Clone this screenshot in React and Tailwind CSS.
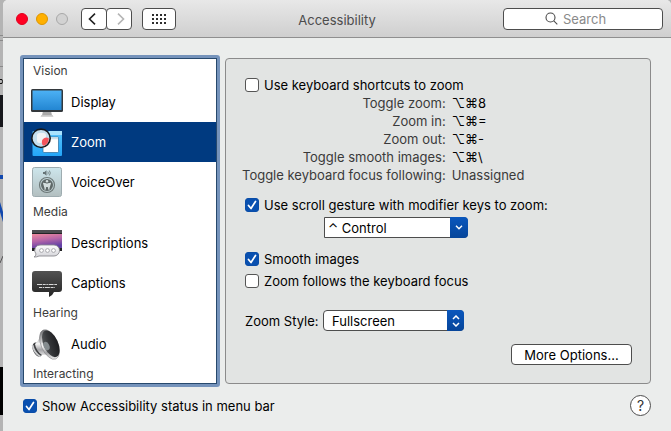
import { useState } from 'react';

const shortcuts = [
  { label: 'Toggle zoom:', keys: '⌥⌘', value: '8' },
  { label: 'Zoom in:', keys: '⌥⌘', value: '=' },
  { label: 'Zoom out:', keys: '⌥⌘', value: '-' },
  { label: 'Toggle smooth images:', keys: '⌥⌘', value: '\\' },
  { label: 'Toggle keyboard focus following:', keys: '', value: 'Unassigned' },
];

function DisplayIcon() {
  return (
    <svg width="32" height="32" viewBox="0 0 32 32" aria-hidden="true">
      <defs>
        <linearGradient id="screen" x1="0" y1="0" x2="0" y2="1">
          <stop offset="0" stopColor="#4cb1f5" />
          <stop offset="1" stopColor="#2386d2" />
        </linearGradient>
      </defs>
      <path d="M12 25h8l1 4.500H11z" fill="#a9a9a9" />
      <path d="M10.500 29h11l1 1.800h-13z" fill="#c6c6c6" />
      <rect x="0" y="3" width="32" height="23" rx="1.500" fill="#33383c" />
      <rect x="1.500" y="4.500" width="29" height="19.500" fill="url(#screen)" />
    </svg>
  );
}

function ZoomIcon() {
  return (
    <svg width="32" height="32" viewBox="0 0 32 32" aria-hidden="true">
      <defs>
        <linearGradient id="folder" x1="0" y1="0" x2="0" y2="1">
          <stop offset="0" stopColor="#5cc4fb" />
          <stop offset="1" stopColor="#23a6f8" />
        </linearGradient>
      </defs>
      <rect x="1.500" y="5" width="29.500" height="25" rx="1" fill="url(#folder)" />
      <rect x="18" y="5" width="13" height="4" fill="#a9e2fd" />
      <rect x="12" y="11" width="15.500" height="15.500" rx="1" fill="#fff" stroke="#2b6b99" strokeWidth="0.700" />
      <rect x="12.500" y="11.300" width="14.500" height="2" fill="#cfdfe8" />
      <circle cx="10" cy="12.300" r="9.200" fill="#c5dfee" stroke="#17191c" strokeWidth="1.600" />
      <rect x="6" y="7" width="9" height="10" rx="2.500" fill="#f1f3f5" />
      <path d="M10.800 16.500a4.500 4.500 0 0 1 7-4.200 8 8 0 0 1-4.800 7.500 3.500 3.500 0 0 1-2.200-3.300z" fill="#f4555c" />
    </svg>
  );
}

function VoiceOverIcon() {
  return (
    <svg width="32" height="32" viewBox="0 0 32 32" aria-hidden="true">
      <defs>
        <linearGradient id="plate" x1="0" y1="0" x2="0" y2="1">
          <stop offset="0" stopColor="#cde6ec" />
          <stop offset="1" stopColor="#b3bfc0" />
        </linearGradient>
      </defs>
      <rect x="1.500" y="1.500" width="29" height="29" rx="2" fill="url(#plate)" stroke="#9eacb0" />
      <path d="M12 6h1.500l2-1.800v5.600l-2-1.800H12z" fill="#667376" />
      <path d="M16.800 5.500q1 1.500 0 3M18.300 4.500q2 2.500 0 5" fill="none" stroke="#667376" strokeWidth="0.800" />
      <circle cx="16" cy="19" r="7.500" fill="none" stroke="#6d7878" strokeWidth="1.200" />
      <circle cx="16" cy="19" r="6" fill="#5f6969" />
      <circle cx="16" cy="15.200" r="1.200" fill="#d5dfdf" />
      <path d="M12 17.200l3 .6v2l-1 4M20 17.200l-3 .6v2l1 4M15 18h2v2.500h-2z" fill="#d5dfdf" stroke="#d5dfdf" strokeWidth="1" />
    </svg>
  );
}

function DescriptionsIcon() {
  return (
    <svg width="32" height="32" viewBox="0 0 32 32" aria-hidden="true">
      <defs>
        <linearGradient id="sunset" x1="0" y1="0" x2="0.300" y2="1">
          <stop offset="0" stopColor="#f08a9d" />
          <stop offset="0.500" stopColor="#b766a8" />
          <stop offset="1" stopColor="#6140a5" />
        </linearGradient>
        <linearGradient id="bubble" x1="0" y1="0" x2="0" y2="1">
          <stop offset="0" stopColor="#fdfdfd" />
          <stop offset="1" stopColor="#d3d3d8" />
        </linearGradient>
      </defs>
      <rect x="1" y="3" width="30" height="21" fill="#232326" />
      <rect x="1" y="3" width="30" height="3" fill="#4c4c4f" />
      <rect x="1" y="7" width="30" height="14" fill="url(#sunset)" />
      <path d="M10 18h13a5.500 5.500 0 0 1 0 11H8q-2 1.200-5 1 1.800-1 2-3a5.500 5.500 0 0 1 5-9z" fill="url(#bubble)" stroke="#8b8b90" strokeWidth="0.900" />
      <g fill="#fff" stroke="#97979c" strokeWidth="0.800">
        <circle cx="10.500" cy="23.500" r="1.900" />
        <circle cx="16.500" cy="23.500" r="1.900" />
        <circle cx="22.500" cy="23.500" r="1.900" />
      </g>
    </svg>
  );
}

function CaptionsIcon() {
  return (
    <svg width="32" height="32" viewBox="0 0 32 32" aria-hidden="true">
      <defs>
        <linearGradient id="caption" x1="0" y1="0" x2="0" y2="1">
          <stop offset="0" stopColor="#525252" />
          <stop offset="1" stopColor="#242424" />
        </linearGradient>
      </defs>
      <path d="M4 4h24a3 3 0 0 1 3 3v15a3 3 0 0 1-3 3h-5q-1 3-5 5v-5H4a3 3 0 0 1-3-3V7a3 3 0 0 1 3-3z" fill="url(#caption)" />
      <path d="M6 17.500h20" stroke="#d8d8d8" strokeWidth="1" strokeDasharray="5 .7 3 .7 1.500 .7" />
      <path d="M8 20.500h16" stroke="#d8d8d8" strokeWidth="1" strokeDasharray="3 .7 1.500 .7 5 .7" />
    </svg>
  );
}

function AudioIcon() {
  return (
    <svg width="32" height="32" viewBox="0 0 32 32" aria-hidden="true">
      <defs>
        <linearGradient id="metal" x1="0" y1="0" x2="0" y2="1">
          <stop offset="0" stopColor="#6f7073" />
          <stop offset="0.450" stopColor="#f6f6f6" />
          <stop offset="0.700" stopColor="#a3a3a6" />
          <stop offset="1" stopColor="#f2f2f2" />
        </linearGradient>
        <linearGradient id="cone" x1="0" y1="0" x2="1" y2="0.300">
          <stop offset="0" stopColor="#5b5e60" />
          <stop offset="0.500" stopColor="#35373a" />
          <stop offset="1" stopColor="#202124" />
        </linearGradient>
      </defs>
      <ellipse cx="6.500" cy="21.500" rx="4.500" ry="7.500" transform="rotate(-24 6.500 21.500)" fill="#3e4043" />
      <path d="M1.500 17q1.500 8 8 11.500" fill="none" stroke="#c9cacc" strokeWidth="1.800" />
      <path d="M4 16q4-3 6-11l11 24q-6-3-10-2-6-4-7-11z" fill="url(#metal)" />
      <ellipse cx="18.500" cy="16.500" rx="8.300" ry="15.800" transform="rotate(-24 18.500 16.500)" fill="url(#metal)" stroke="#77787b" strokeWidth="0.500" />
      <ellipse cx="19.800" cy="15.800" rx="7.200" ry="14.300" transform="rotate(-24 19.800 15.800)" fill="url(#cone)" />
      <ellipse cx="15.500" cy="18" rx="2.800" ry="4.500" transform="rotate(-24 15.500 18)" fill="#858c8f" />
    </svg>
  );
}

const sections = [
  {
    title: 'Vision',
    items: [
      { name: 'Display', Icon: DisplayIcon },
      { name: 'Zoom', Icon: ZoomIcon },
      { name: 'VoiceOver', Icon: VoiceOverIcon },
    ],
  },
  {
    title: 'Media',
    items: [
      { name: 'Descriptions', Icon: DescriptionsIcon },
      { name: 'Captions', Icon: CaptionsIcon },
    ],
  },
  { title: 'Hearing', items: [{ name: 'Audio', Icon: AudioIcon }] },
  { title: 'Interacting', items: [] },
];

// Sliver of the desktop that shows left of the window
function Backdrop() {
  return (
    <svg width="3" height="431" viewBox="0 0 3 431" className="shrink-0" aria-hidden="true">
      <rect width="3" height="431" fill="#b4b4b4" />
      <path d="M0 35.500h3M0 40.500h3M0 66.500h3" stroke="#8a8a8a" />
      <path d="M0 79.500h2q1 2 0 4H0" fill="none" stroke="#111" />
      <rect y="95" width="3" height="32" fill="#17181c" />
      <rect y="175" width="3" height="4" fill="#1048ae" />
      <path d="M0 202l3 10v10L0 212z" fill="#1048ae" />
      <path d="M3 256l-3 7" stroke="#555" />
      <rect y="367" width="3" height="48" fill="#000" />
    </svg>
  );
}

function Checkbox({ label, defaultChecked = false }) {
  return (
    <label className="flex w-fit items-center gap-[5px]">
      <span className="grid">
        <input
          type="checkbox"
          defaultChecked={defaultChecked}
          className="peer col-start-1 row-start-1 size-[14px] appearance-none rounded-[3px] border border-[#555] bg-white checked:border-[#0a4da8] checked:bg-[#0950b0]"
        />
        <svg viewBox="0 0 14 14" className="pointer-events-none invisible col-start-1 row-start-1 size-[14px] peer-checked:visible" aria-hidden="true">
          <path d="M3.500 7.500l2.500 3 4.500-7" fill="none" stroke="#fff" strokeWidth="1.700" strokeLinecap="round" strokeLinejoin="round" />
        </svg>
      </span>
      {label}
    </label>
  );
}

function Toolbar() {
  return (
    <header className="grid h-[38px] grid-cols-[1fr_auto_1fr] items-center rounded-t-[5px] border-b border-[#8f8f8f] bg-linear-to-b from-[#e8e8e8] to-[#cfcfcf] px-2">
      <div className="flex items-center pl-[5px]">
        <div className="flex gap-2">
          <button aria-label="Close" className="size-3 rounded-full border border-[#e0001f] bg-[#ff0022]" />
          <button aria-label="Minimize" className="size-3 rounded-full border border-[#dd9500] bg-[#ffb000]" />
          <button aria-label="Full screen" className="size-3 rounded-full border border-[#a8a8a8] bg-[#d2d2d2]" />
        </div>
        <div className="ml-[13px] flex">
          <button aria-label="Back" className="flex h-[22px] w-[26px] items-center justify-center rounded-sm border border-[#4d4d4d] bg-white">
            <svg width="8" height="12" viewBox="0 0 8 12" fill="none" stroke="#222" strokeWidth="1.600" className="mr-1" aria-hidden="true">
              <path d="M7 .7L1.500 6 7 11.300" />
            </svg>
          </button>
          <button aria-label="Forward" className="-ml-px flex h-[22px] w-[26px] items-center justify-center rounded-sm border border-[#4d4d4d] bg-white">
            <svg width="8" height="12" viewBox="0 0 8 12" fill="none" stroke="#b5b5b5" strokeWidth="1.600" className="ml-1" aria-hidden="true">
              <path d="M1 .7L6.500 6 1 11.300" />
            </svg>
          </button>
        </div>
        <button aria-label="Show all" className="ml-[10px] flex h-[22px] w-[34px] items-center justify-center rounded-sm border border-[#4d4d4d] bg-white">
          <svg width="14" height="10" viewBox="0 0 14 10" stroke="#2e2e2e" strokeWidth="2" strokeDasharray="2 2" aria-hidden="true">
            <path d="M0 1h14M0 5h14M0 9h14" />
          </svg>
        </button>
      </div>
      <h1 className="pt-[2px] text-[#4c4c4c]">Accessibility</h1>
      <div className="flex h-[22px] w-[160px] items-center gap-[5px] justify-self-end rounded-sm border border-[#4d4d4d] bg-white pl-[41px]">
        <svg width="13" height="13" viewBox="0 0 13 13" fill="none" stroke="#4a4a4a" strokeWidth="1.100" className="shrink-0" aria-hidden="true">
          <circle cx="5.500" cy="5.500" r="4.500" />
          <path d="M8.800 8.800l3.500 3.500" />
        </svg>
        <input type="search" aria-label="Search" placeholder="Search" className="w-full min-w-0 bg-transparent outline-none placeholder:text-[#8a8a8a]" />
      </div>
    </header>
  );
}

function Sidebar({ selected, onSelect }) {
  return (
    <nav className="h-[332px] w-[200px] shrink-0 rounded-[3px] bg-[#7593bb] p-[3px]">
      <div className="h-full overflow-hidden border border-[#27496d] bg-white pt-[2px]">
        {sections.map(({ title, items }) => (
          <section key={title}>
            <h2 className="h-[21px] pl-[9px] text-xs leading-[20px] text-[#3c3c3c]">{title}</h2>
            {items.map(({ name, Icon }) => (
              <button
                key={name}
                onClick={() => onSelect(name)}
                className={`flex h-10 w-full items-center gap-2 pl-[7px] text-left ${
                  name === selected ? 'bg-[#003a80] text-white' : 'text-black'
                }`}
              >
                <Icon />
                {name}
              </button>
            ))}
          </section>
        ))}
      </div>
    </nav>
  );
}

function ZoomPane() {
  return (
    <main className="flex min-w-0 flex-1 flex-col rounded-[4px] border border-[#8b8b8b] bg-[#e2e4e3] pt-[17px] pr-[18px] pb-[18px] pl-[19px]">
      <Checkbox label="Use keyboard shortcuts to zoom" />
      <dl className="-ml-[3px] grid w-fit grid-cols-[auto_auto] gap-x-[6px] leading-[18px] text-[#3a3a3a]">
        {shortcuts.map(({ label, keys, value }) => (
          <div key={label} className="contents">
            <dt className="text-right whitespace-nowrap">{label}</dt>
            <dd className={keys ? 'text-black' : ''}>
              {keys}
              {value}
            </dd>
          </div>
        ))}
      </dl>
      <div className="mt-3">
        <Checkbox label="Use scroll gesture with modifier keys to zoom:" defaultChecked />
      </div>
      <div className="mt-[3px] ml-[79px] grid w-[144px]">
        <select aria-label="Modifier key" className="col-start-1 row-start-1 h-[21px] appearance-none rounded-r-[4px] border border-[#4d4d4d] bg-white pl-[3px] text-black">
          <option>⌃ Control</option>
          <option>⌥ Option</option>
          <option>⌘ Command</option>
        </select>
        <span className="pointer-events-none col-start-1 row-start-1 flex w-[18px] items-center justify-center justify-self-end rounded-r-[4px] bg-linear-to-b from-[#0a57bd] to-[#06459a]">
          <svg width="8" height="5" viewBox="0 0 8 5" fill="none" stroke="#fff" strokeWidth="1.400" aria-hidden="true">
            <path d="M1 .8l3 3 3-3" />
          </svg>
        </span>
      </div>
      <div className="mt-3 flex flex-col gap-[4px]">
        <Checkbox label="Smooth images" defaultChecked />
        <Checkbox label="Zoom follows the keyboard focus" />
      </div>
      <div className="mt-5 flex items-center gap-[6px]">
        <label htmlFor="zoom-style" className="w-[72px] whitespace-nowrap">Zoom Style:</label>
        <div className="grid w-[141px]">
          <select id="zoom-style" className="col-start-1 row-start-1 h-[21px] appearance-none rounded-[4px] border border-[#4d4d4d] bg-white pl-2 text-black">
            <option>Fullscreen</option>
            <option>Picture-in-picture</option>
          </select>
          <span className="pointer-events-none col-start-1 row-start-1 flex w-[17px] items-center justify-center justify-self-end rounded-r-[4px] bg-linear-to-b from-[#0a57bd] to-[#06459a]">
            <svg width="8" height="12" viewBox="0 0 8 12" fill="none" stroke="#fff" strokeWidth="1.500" aria-hidden="true">
              <path d="M1 4l3-3 3 3M1 8l3 3 3-3" />
            </svg>
          </span>
        </div>
      </div>
      <button className="mt-auto h-[21px] w-[121px] self-end rounded-[4px] border border-[#4d4d4d] bg-white text-black">
        More Options...
      </button>
    </main>
  );
}

export default function App() {
  const [selected, setSelected] = useState('Zoom');

  return (
    <div className="flex min-h-screen bg-[#b4b4b4] font-['Inter','DejaVu_Sans',sans-serif] text-[13px] leading-[18px] text-black">
      <Backdrop />
      <div className="min-w-0 flex-1 rounded-t-[5px] bg-[#ebedec]">
        <Toolbar />
        <div className="flex gap-[5px] pt-[17px] pr-5 pl-[17px]">
          <Sidebar selected={selected} onSelect={setSelected} />
          <div className="flex flex-1 py-[3px]">
            <ZoomPane />
          </div>
        </div>
        <footer className="flex items-center justify-between pt-2 pr-5 pl-5">
          <Checkbox label="Show Accessibility status in menu bar" defaultChecked />
          <button aria-label="Help" className="size-[21px] rounded-full border border-[#4d4d4d] bg-white text-sm leading-[18px] text-[#333]">
            ?
          </button>
        </footer>
      </div>
    </div>
  );
}
